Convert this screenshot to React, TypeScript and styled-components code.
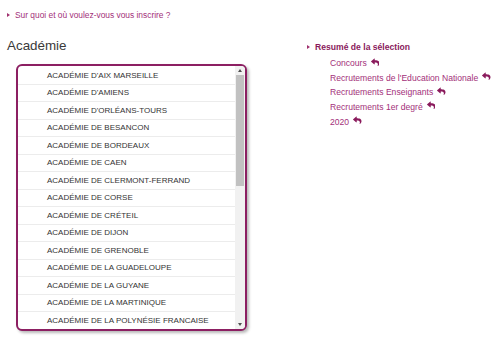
import React from 'react'
import styled, { createGlobalStyle } from 'styled-components'
import { FaReply } from 'react-icons/fa'

const academies = [
  "ACADÉMIE D'AIX MARSEILLE",
  "ACADÉMIE D'AMIENS",
  "ACADÉMIE D'ORLÉANS-TOURS",
  'ACADÉMIE DE BESANCON',
  'ACADÉMIE DE BORDEAUX',
  'ACADÉMIE DE CAEN',
  'ACADÉMIE DE CLERMONT-FERRAND',
  'ACADÉMIE DE CORSE',
  'ACADÉMIE DE CRÉTEIL',
  'ACADÉMIE DE DIJON',
  'ACADÉMIE DE GRENOBLE',
  'ACADÉMIE DE LA GUADELOUPE',
  'ACADÉMIE DE LA GUYANE',
  'ACADÉMIE DE LA MARTINIQUE',
  'ACADÉMIE DE LA POLYNÉSIE FRANCAISE',
  'ACADÉMIE DE LA RÉUNION',
  'ACADÉMIE DE LILLE',
  'ACADÉMIE DE LIMOGES',
  'ACADÉMIE DE LYON',
  'ACADÉMIE DE MAYOTTE',
  'ACADÉMIE DE MONTPELLIER',
  'ACADÉMIE DE NANCY-METZ',
  'ACADÉMIE DE NANTES',
  'ACADÉMIE DE NICE',
  'ACADÉMIE DE NOUVELLE-CALÉDONIE',
  'ACADÉMIE DE PARIS',
  'ACADÉMIE DE POITIERS',
  'ACADÉMIE DE REIMS',
  'ACADÉMIE DE RENNES',
  'ACADÉMIE DE ROUEN',
  'ACADÉMIE DE STRASBOURG',
  'ACADÉMIE DE TOULOUSE',
  'ACADÉMIE DE VERSAILLES',
]

const selection = [
  'Concours',
  "Recrutements de l'Education Nationale",
  'Recrutements Enseignants',
  'Recrutements 1er degré',
  '2020',
]

const VISIBLE_ROWS = 15

const GlobalStyle = createGlobalStyle`
  html, body {
    margin: 0;
    background: #fff;
    font-family: 'Liberation Sans', Arial, sans-serif;
  }
`

const Page = styled.div`
  display: flex;
  width: 497px;
  height: 347px;
  box-sizing: border-box;
  padding: 9px 0 0 7px;
  overflow: hidden;
`

const LeftColumn = styled.div`
  width: 245px;
  display: flex;
  flex-direction: column;
`

const RightColumn = styled.div`
  margin-left: 55px;
  padding-top: 32px;
  display: flex;
  flex-direction: column;
`

const Bullet = styled.span`
  display: inline-block;
  width: 0;
  height: 0;
  border-top: 2.5px solid transparent;
  border-bottom: 2.5px solid transparent;
  border-left: 3px solid #a0306e;
  margin-right: 5px;
`

const TopLink = styled.a`
  display: flex;
  align-items: center;
  font-size: 8.4px;
  color: #a3307a;
  text-decoration: none;
  height: 11px;
`

const Title = styled.h2`
  margin: 18px 0 0 0;
  font-size: 13.4px;
  font-weight: normal;
  color: #3a3a3a;
  line-height: 16px;
`

const ListBox = styled.div`
  margin: 10px 0 0 9px;
  width: 231px;
  height: 267px;
  box-sizing: border-box;
  border: 2px solid #8c1f62;
  border-radius: 6px;
  box-shadow: 2px 2px 3px rgba(0, 0, 0, 0.28);
  background: #fff;
  display: flex;
  overflow: hidden;
`

const Rows = styled.div`
  flex: 1;
  padding-top: 1px;
  overflow: hidden;
`

const Row = styled.div`
  height: 17.5px;
  box-sizing: border-box;
  border-bottom: 1px solid #ececec;
  display: flex;
  align-items: center;
  padding-left: 29px;
  font-size: 8px;
  color: #333;
  white-space: nowrap;
`

const ScrollTrack = styled.div`
  width: 10px;
  background: #f1f1f1;
  display: flex;
  flex-direction: column;
`

const ScrollArrow = styled.div<{ $down?: boolean }>`
  height: 9px;
  display: flex;
  align-items: center;
  justify-content: center;

  &::after {
    content: '';
    width: 0;
    height: 0;
    border-left: 2px solid transparent;
    border-right: 2px solid transparent;
    ${(p) =>
      p.$down ? 'border-top: 3px solid #505050;' : 'border-bottom: 3px solid #505050;'}
  }
`

const ThumbArea = styled.div`
  flex: 1;
  padding: 0 1px;
`

const Thumb = styled.div`
  background: #c1c1c1;
`

const SummaryTitle = styled.div`
  display: flex;
  align-items: center;
  font-size: 8.6px;
  font-weight: bold;
  color: #8a1a5c;
  height: 12px;
`

const SummaryList = styled.ul`
  list-style: none;
  margin: 3px 0 0 0;
  padding: 0 0 0 23px;
`

const SummaryItem = styled.li`
  display: flex;
  align-items: center;
  height: 14.6px;
  font-size: 8.6px;
  color: #a3307a;

  svg {
    margin-left: 4px;
    margin-top: -3px;
    width: 8.5px;
    height: 8.5px;
    color: #8a1a5c;
  }
`

export default function App() {
  const thumbPct = (VISIBLE_ROWS / academies.length) * 100

  return (
    <>
      <GlobalStyle />
      <Page>
        <LeftColumn>
          <TopLink href="#">
            <Bullet />
            Sur quoi et où voulez-vous vous inscrire ?
          </TopLink>
          <Title>Académie</Title>
          <ListBox>
            <Rows>
              {academies.map((a) => (
                <Row key={a}>{a}</Row>
              ))}
            </Rows>
            <ScrollTrack>
              <ScrollArrow />
              <ThumbArea>
                <Thumb style={{ height: `${thumbPct}%` }} />
              </ThumbArea>
              <ScrollArrow $down />
            </ScrollTrack>
          </ListBox>
        </LeftColumn>
        <RightColumn>
          <SummaryTitle>
            <Bullet />
            Resumé de la sélection
          </SummaryTitle>
          <SummaryList>
            {selection.map((s) => (
              <SummaryItem key={s}>
                {s}
                <FaReply />
              </SummaryItem>
            ))}
          </SummaryList>
        </RightColumn>
      </Page>
    </>
  )
}
